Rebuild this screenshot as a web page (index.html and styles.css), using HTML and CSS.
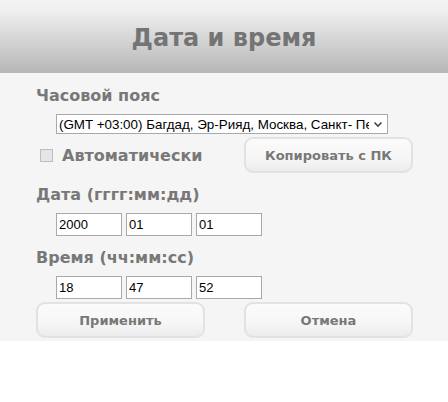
FILE: index.html
```html
<!DOCTYPE html>
<html lang="ru">
<head>
<meta charset="utf-8">
<title>Дата и время</title>
<link rel="stylesheet" href="styles.css">
</head>
<body>
<div class="page">
  <header class="header"><h1 class="title">Дата и время</h1></header>
  <main class="content">
    <div class="label">Часовой пояс</div>
    <div class="indent select-wrap">
      <select class="tz">
        <option>(GMT +03:00) Багдад, Эр-Рияд, Москва, Санкт- Петербург, Волгоград</option>
      </select>
      <svg class="chev" width="10" height="7" viewBox="0 0 10 7" aria-hidden="true"><path d="M1.5 1.5 L5 5 L8.5 1.5" fill="none" stroke="#444" stroke-width="1.6"/></svg>
    </div>
    <div class="row">
      <label class="auto"><span class="check"></span><span class="auto-text">Автоматически</span></label>
      <button class="btn">Копировать с ПК</button>
    </div>
    <div class="label label-gap">Дата (гггг:мм:дд)</div>
    <div class="indent fields">
      <input class="field" type="text" value="2000">
      <input class="field" type="text" value="01">
      <input class="field" type="text" value="01">
    </div>
    <div class="label label-gap">Время (чч:мм:сс)</div>
    <div class="indent fields">
      <input class="field" type="text" value="18">
      <input class="field" type="text" value="47">
      <input class="field" type="text" value="52">
    </div>
    <div class="row actions">
      <button class="btn">Применить</button>
      <button class="btn">Отмена</button>
    </div>
  </main>
</div>
</body>
</html>
```

FILE: styles.css
```css
html, body {
  margin: 0;
  padding: 0;
  background: #ffffff;
}

.page {
  width: 448px;
  background: #f5f5f5;
  font-family: "DejaVu Sans", Verdana, sans-serif;
}

.header {
  height: 73px;
  background: linear-gradient(to bottom, #f4f4f4 0%, #efefef 15%, #b6b6b6 100%);
  display: flex;
  align-items: center;
  justify-content: center;
}

.title {
  margin: 0;
  padding-top: 3px;
  font-size: 24px;
  font-weight: bold;
  color: #747474;
}

.content {
  padding: 13px 0 3px 36px;
}

.label {
  font-size: 16px;
  line-height: 19px;
  font-weight: bold;
  color: #787878;
}

.label-gap {
  margin-top: 12px;
}

.indent {
  margin-left: 20px;
  margin-top: 9px;
}

.select-wrap {
  position: relative;
  width: 332px;
}

.tz {
  display: block;
  width: 332px;
  height: 20px;
  margin: 0;
  padding: 0 18px 0 2px;
  border: 1px solid #a9a9a9;
  border-radius: 0;
  background: #ffffff;
  -webkit-appearance: none;
  appearance: none;
  font-family: "Liberation Sans", Arial, sans-serif;
  font-size: 13.4px;
  color: #000;
}

.chev {
  position: absolute;
  right: 5px;
  top: 7px;
  pointer-events: none;
}

.row {
  display: flex;
  align-items: center;
  margin-top: 3px;
  gap: 39px;
}

.auto {
  width: 169px;
  display: flex;
  align-items: center;
  gap: 9px;
  padding-left: 4px;
  box-sizing: border-box;
}

.check {
  width: 11px;
  height: 11px;
  border: 1px solid #bdbdbd;
  background: #e6e6e6;
}

.auto-text {
  font-size: 16px;
  font-weight: bold;
  color: #787878;
}

.btn {
  width: 169px;
  height: 36px;
  border: 2px solid #e2e2e2;
  border-radius: 9px;
  background: linear-gradient(to bottom, #fbfbfb 0%, #f6f6f6 60%, #ececec 100%);
  font-family: "DejaVu Sans", Verdana, sans-serif;
  font-size: 13px;
  font-weight: bold;
  color: #787878;
  padding: 0;
  margin: 0;
}

.fields {
  display: flex;
  gap: 4px;
}

.field {
  width: 66px;
  height: 23px;
  box-sizing: border-box;
  margin: 0;
  padding: 0 2px;
  border: 1px solid #a9a9a9;
  background: #ffffff;
  font-family: "Liberation Sans", Arial, sans-serif;
  font-size: 13px;
  color: #000;
}

.actions {
  margin-top: 3px;
}
```
